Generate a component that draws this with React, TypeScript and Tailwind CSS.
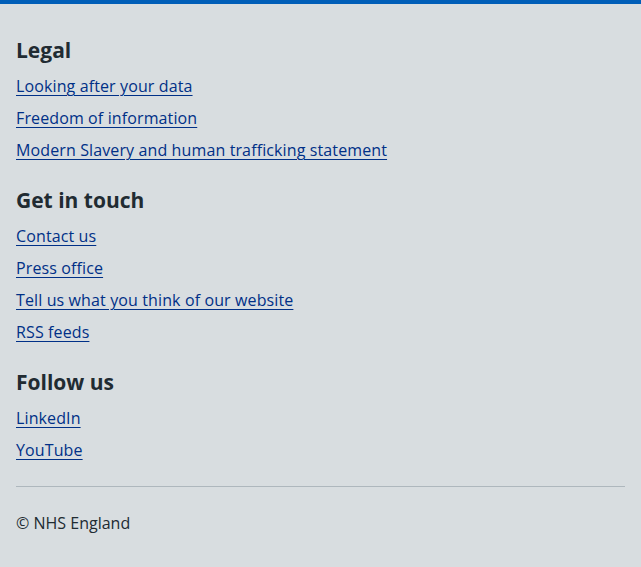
import React from "react";

const sections = [
  {
    title: "Legal",
    links: [
      "Looking after your data",
      "Freedom of information",
      "Modern Slavery and human trafficking statement",
    ],
  },
  {
    title: "Get in touch",
    links: [
      "Contact us",
      "Press office",
      "Tell us what you think of our website",
      "RSS feeds",
    ],
  },
  {
    title: "Follow us",
    links: ["LinkedIn", "YouTube"],
  },
];

export default function App() {
  return (
    <footer
      className="min-h-[567px] w-full bg-[#d8dde0] border-t-4 border-[#005eb8] px-4 pt-8 pb-8 text-[#212b32]"
      style={{ fontFamily: '"Open Sans", "Noto Sans", Arial, sans-serif' }}
    >
      <div className="flex flex-col gap-6">
        {sections.map((s) => (
          <div key={s.title}>
            <h2 className="text-[21px] leading-[28px] font-bold mb-[10px]">{s.title}</h2>
            <ul className="flex flex-col gap-2">
              {s.links.map((l) => (
                <li key={l} className="text-[16px] leading-[24px] tracking-[0.12px]">
                  <a
                    href="#"
                    className="text-[#003087] underline underline-offset-[3px] decoration-1"
                  >
                    {l}
                  </a>
                </li>
              ))}
            </ul>
          </div>
        ))}
      </div>
      <hr className="mt-6 border-0 border-t border-[#aeb7bd]" />
      <p className="mt-6 text-[16px] leading-[24px]">© NHS England</p>
    </footer>
  );
}
